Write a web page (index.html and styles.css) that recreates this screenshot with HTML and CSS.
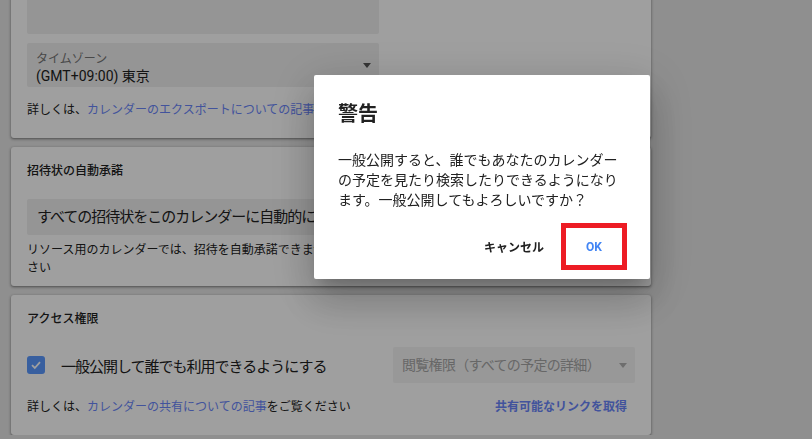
FILE: index.html
```html
<!DOCTYPE html>
<html lang="ja">
<head>
  <meta charset="UTF-8">
  <meta name="viewport" content="width=device-width, initial-scale=1.0">
  <title>カレンダーの設定</title>
  <link rel="stylesheet" href="styles.css">
</head>
<body>
  <div class="settings">
    <section class="card card-export">
      <div class="field field-desc"></div>
      <div class="select select-tz">
        <div class="select-label">タイムゾーン</div>
        <div class="select-value">(GMT+09:00) 東京</div>
        <span class="arrow"></span>
      </div>
      <p class="help">詳しくは、<a href="#">カレンダーのエクスポートについての記事</a>をご覧ください</p>
    </section>

    <section class="card">
      <h2 class="card-title">招待状の自動承諾</h2>
      <div class="field field-auto">すべての招待状をこのカレンダーに自動的に承諾する</div>
      <p class="help help-wrap">リソース用のカレンダーでは、招待を自動承諾できません。詳しくは、リソース予約についての記事をご覧ください</p>
    </section>

    <section class="card">
      <h2 class="card-title">アクセス権限</h2>
      <div class="access-row">
        <label class="check">
          <span class="check-box">
            <svg width="12" height="12" viewBox="0 0 12 12"><path d="M2 6.2 L4.8 9 L10 3.2" fill="none" stroke="#fff" stroke-width="1.8"/></svg>
          </span>
          <span class="check-text">一般公開して誰でも利用できるようにする</span>
        </label>
        <div class="select select-perm">
          <span>閲覧権限（すべての予定の詳細）</span>
          <span class="arrow"></span>
        </div>
      </div>
      <div class="card-foot">
        <p class="help">詳しくは、<a href="#">カレンダーの共有についての記事</a>をご覧ください</p>
        <a class="share-link" href="#">共有可能なリンクを取得</a>
      </div>
    </section>
  </div>

  <div class="scrim"></div>

  <div class="dialog">
    <h1 class="dialog-title">警告</h1>
    <p class="dialog-body">一般公開すると、誰でもあなたのカレンダーの予定を見たり検索したりできるようになります。一般公開してもよろしいですか？</p>
    <div class="dialog-actions">
      <button class="btn btn-cancel">キャンセル</button>
      <div class="mark">
        <button class="btn btn-ok">OK</button>
      </div>
    </div>
  </div>
</body>
</html>
```

FILE: styles.css
```css
body {
  margin: 0;
  background: #e6e6e6;
  color: #212121;
  font-family: Roboto, "Noto Sans CJK JP", sans-serif;
  overflow: hidden;
}
a {
  color: #6a86fa;
  text-decoration: none;
}
.settings {
  width: 640px;
  margin: -32px 0 0 11px;
  display: flex;
  flex-direction: column;
  gap: 9px;
}
.card {
  background: #fff;
  border-radius: 3px;
  box-shadow: 0 1px 2px rgba(0, 0, 0, 0.3), 0 1px 3px 1px rgba(0, 0, 0, 0.15);
  padding: 15px 16px 19px;
}
.card-export {
  padding-top: 16px;
}
.card-title {
  margin: 0;
  font-size: 12px;
  line-height: 18px;
  font-weight: 500;
}
.help {
  margin: 0;
  font-size: 12px;
  line-height: 18px;
}
.field {
  background: #efefef;
  border-radius: 2px;
}
.field-desc {
  width: 352px;
  height: 50px;
  margin-bottom: 9px;
}
.select {
  position: relative;
  background: #efefef;
  border-radius: 2px;
}
.arrow {
  position: absolute;
  top: 50%;
  margin-top: -2px;
  border-left: 4px solid transparent;
  border-right: 4px solid transparent;
  border-top: 5px solid #555;
}
.select-tz {
  width: 352px;
  height: 44px;
  box-sizing: border-box;
  padding: 8px 9px 0;
}
.select-tz .arrow {
  right: 8px;
}
.select-label {
  font-size: 12px;
  line-height: 16px;
  color: #757575;
}
.select-value {
  font-size: 14px;
  line-height: 18px;
}
.card-export .help {
  margin-top: 14px;
}
.field-auto {
  margin-top: 19px;
  height: 36px;
  line-height: 36px;
  padding: 0 10px;
  font-size: 15px;
  letter-spacing: -1px;
  white-space: nowrap;
  overflow: hidden;
}
.help-wrap {
  margin-top: 6px;
}
.card:nth-child(2) {
  padding-bottom: 9px;
}
.access-row {
  margin-top: 19px;
  display: flex;
  align-items: center;
  justify-content: space-between;
  height: 36px;
}
.check {
  display: flex;
  align-items: center;
  gap: 16px;
}
.check-box {
  width: 18px;
  height: 18px;
  border-radius: 3px;
  background: #5b98ff;
  display: flex;
  align-items: center;
  justify-content: center;
}
.check-text {
  font-size: 15px;
  letter-spacing: -1px;
}
.select-perm {
  width: 242px;
  height: 36px;
  box-sizing: border-box;
  padding: 0 9px;
  background: #f4f4f4;
  color: #a6a6a6;
  font-size: 14px;
  letter-spacing: -0.7px;
  line-height: 36px;
}
.select-perm .arrow {
  right: 8px;
  border-top-color: #b0b0b0;
}
.card-foot {
  margin-top: 15px;
  display: flex;
  justify-content: space-between;
  align-items: baseline;
}
.share-link {
  font-size: 12px;
  font-weight: 700;
  line-height: 18px;
  margin-right: 8px;
}
.scrim {
  position: fixed;
  inset: 0;
  background: rgba(0, 0, 0, 0.375);
}
.dialog {
  position: fixed;
  left: 314px;
  top: 75px;
  width: 336px;
  height: 204px;
  box-sizing: border-box;
  padding: 25px 23px 10px 24px;
  background: #fff;
  border-radius: 2px;
  box-shadow: 0 11px 15px -7px rgba(0, 0, 0, 0.2), 0 24px 38px 3px rgba(0, 0, 0, 0.14), 0 9px 46px 8px rgba(0, 0, 0, 0.12);
}
.dialog-title {
  margin: 0;
  font-size: 20px;
  line-height: 28px;
  font-weight: 700;
}
.dialog-body {
  margin: 22px 0 0;
  font-size: 14px;
  line-height: 20px;
}
.dialog-actions {
  margin-top: 13px;
  display: flex;
  justify-content: flex-end;
  align-items: center;
}
.btn {
  border: none;
  background: none;
  font-family: Roboto, "Noto Sans CJK JP", sans-serif;
  font-size: 12px;
  font-weight: 700;
  padding: 0 8px;
  height: 36px;
  cursor: pointer;
}
.btn-cancel {
  color: #212121;
  margin-right: 9px;
}
.mark {
  width: 66px;
  height: 47px;
  box-sizing: border-box;
  border: 5px solid #ed1c24;
  display: flex;
  align-items: center;
  justify-content: center;
}
.btn-ok {
  color: #4285f4;
}
```
